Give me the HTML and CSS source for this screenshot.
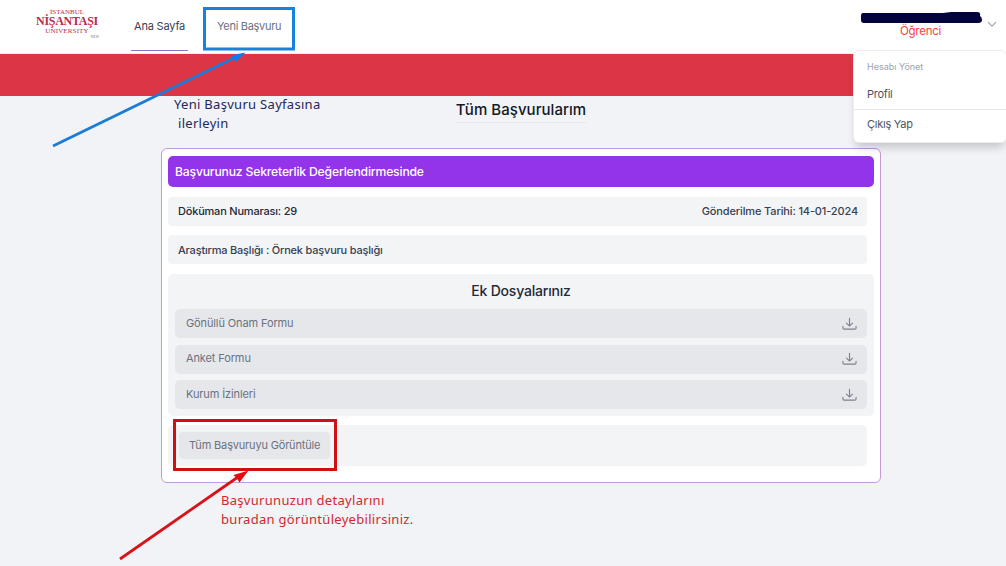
FILE: index.html
```html
<!DOCTYPE html>
<html lang="tr">
<head>
<meta charset="utf-8">
<title>Tüm Başvurularım</title>
<link rel="stylesheet" href="styles.css">
</head>
<body>
<header class="nav">
  <div class="logo"><span class="logo-top">İSTANBUL</span><span class="logo-name">NİŞANTAŞI</span><span class="logo-bottom">UNIVERSITY</span><span class="logo-sign">NEW</span></div>
  <nav class="links">
    <a class="link active"><span class="t-home">Ana Sayfa</span></a>
    <a class="link"><span class="t-new">Yeni Başvuru</span></a>
  </nav>
  <div class="user">
    <div class="identity">
      <svg class="redaction" width="122" height="12" viewBox="0 0 122 12"><path d="M2 1Q0 1 0 4V8Q0 11 3 11H117Q121 11 121 8Q121 5 119 4Q120 0 116 0H90L82 1Z" fill="#02023f"/></svg>
      <span class="role">Öğrenci</span>
    </div>
    <svg class="chevron" width="10" height="7" viewBox="0 0 10 7"><path d="M1 1.2L5 5.2L9 1.2" fill="none" stroke="#9ca3af" stroke-width="1.2"/></svg>
    <div class="menu">
      <div class="menu-title">Hesabı Yönet</div>
      <a class="menu-item">Profil</a>
      <a class="menu-item logout">Çıkış Yap</a>
    </div>
  </div>
</header>
<div class="banner"></div>
<main class="content">
  <h1 class="title"><span>Tüm Başvurularım</span></h1>
  <section class="card">
    <h2 class="status"><span>Başvurunuz Sekreterlik Değerlendirmesinde</span></h2>
    <div class="row"><span class="t-doc">Döküman Numarası: 29</span><span class="t-date">Gönderilme Tarihi: 14-01-2024</span></div>
    <div class="row subject"><span class="t-subject">Araştırma Başlığı : Örnek başvuru başlığı</span></div>
    <div class="files">
      <h3 class="files-title"><span>Ek Dosyalarınız</span></h3>
      <div class="file"><span class="t-consent">Gönüllü Onam Formu</span><svg class="download" viewBox="0 0 16 14"><path d="M8 1V9M4.8 6L8 9.2L11.2 6M1 9.5V11.2Q1 12.5 2.3 12.5H13.7Q15 12.5 15 11.2V9.5"/></svg></div>
      <div class="file"><span class="t-survey">Anket Formu</span><svg class="download" viewBox="0 0 16 14"><path d="M8 1V9M4.8 6L8 9.2L11.2 6M1 9.5V11.2Q1 12.5 2.3 12.5H13.7Q15 12.5 15 11.2V9.5"/></svg></div>
      <div class="file"><span class="t-permit">Kurum İzinleri</span><svg class="download" viewBox="0 0 16 14"><path d="M8 1V9M4.8 6L8 9.2L11.2 6M1 9.5V11.2Q1 12.5 2.3 12.5H13.7Q15 12.5 15 11.2V9.5"/></svg></div>
    </div>
    <div class="actions"><a class="button"><span>Tüm Başvuruyu Görüntüle</span></a></div>
  </section>
</main>
<svg class="marks" width="1006" height="566" viewBox="0 0 1006 566">
  <rect x="204.5" y="8.5" width="89" height="40.5" fill="none" stroke="#1682dc" stroke-width="3"/>
  <path d="M53 146L236 57" stroke="#1b7cd8" stroke-width="2.8"/>
  <path d="M245.5 52.5L230.5 55.5Q234 57.5 235.5 62Z" fill="#087df0"/>
  <rect x="174.5" y="420.5" width="161" height="49" fill="none" stroke="#cf1116" stroke-width="3"/>
  <path d="M120 559L238 477" stroke="#d81218" stroke-width="2.8"/>
  <path d="M248.5 470.5L233.5 475Q237 477.5 239.5 482.5Z" fill="#e80910"/>
</svg>
<p class="note note-new"><span class="n1">Yeni Başvuru Sayfasına</span><span class="n2">ilerleyin</span></p>
<p class="note note-detail"><span class="n3">Başvurunuzun detaylarını</span><span class="n4">buradan görüntüleyebilirsiniz.</span></p>
</body>
</html>
```
FILE: styles.css
```css
* { box-sizing: border-box; }
body { margin: 0; width: 1006px; height: 566px; overflow: hidden; position: relative; background: #f2f3f6; font-family: Inter, "Noto Sans", sans-serif; color: #374151; font-size: 11px; }
span { white-space: nowrap; }
.nav { height: 54px; background: #fff; border-bottom: 1px solid #f0edf2; display: flex; padding-left: 35px; }
.logo { width: 64px; height: 42px; padding-top: 9px; display: flex; flex-direction: column; align-items: center; font-family: "Liberation Serif", serif; color: #b92b50; }
.logo-top { font-size: 7px; line-height: 7px; }
.logo-name { font-size: 12px; line-height: 11px; font-weight: bold; letter-spacing: -0.3px; }
.logo-bottom { font-size: 7px; line-height: 8px; letter-spacing: .15px; }
.logo-sign { font-size: 4px; line-height: 4px; color: #777; align-self: flex-end; font-style: italic; }
.links { display: flex; margin-left: 32px; gap: 26px; }
.link { height: 51px; padding: 18px 3px 0; line-height: 17px; color: #6b7280; border-bottom: 2px solid transparent; letter-spacing: -.3px; }
.link.active { width: 57px; color: #374151; border-bottom: 1px solid #817cc9; letter-spacing: -.2px; }
.user { position: relative; margin-left: auto; width: 152px; padding: 12px 0 0 7px; display: flex; }
.identity { width: 122px; display: flex; flex-direction: column; align-items: center; }
.redaction { display: block; }
.role { color: #ef4444; font-size: 11.5px; line-height: 14px; margin-left: -3px; letter-spacing: -.25px; }
.chevron { margin: 9px 0 0 4px; }
.menu { position: absolute; z-index: 2; left: 0; top: 51px; width: 152px; height: 91px; background: #fff; border-radius: 5px; box-shadow: 0 0 0 1px #ededf0, 0 7px 10px -2px #0003; }
.menu-title { padding: 8px 13px 0; font-size: 9px; line-height: 16px; color: #9ca3af; }
.menu-item { display: block; height: 34px; padding: 10px 13px 0; line-height: 18px; letter-spacing: -.25px; color: #4b5563; }
.logout { height: 32px; padding-top: 5px; border-top: 1px solid #e5e7eb; }
.banner { height: 42px; background: #dc3545; }
.content { padding-left: 161px; }
.title { margin: 0 0 25px; width: 720px; height: 27px; display: flex; justify-content: center; font-size: 15px; line-height: 27px; font-weight: 500; color: #111827; letter-spacing: .05px; }
.title span { border-bottom: 1px solid #e7e9ee; }
.card { width: 720px; height: 335px; background: #fff; border: 1px solid #c09adb; border-radius: 6px; padding: 7px 6px 0; }
.status { margin: 0; height: 31px; background: #9333ea; border-radius: 5px; color: #fff; font-size: 12.2px; font-weight: 500; line-height: 31px; padding-left: 7px; letter-spacing: -.19px; }
.row { margin: 10px 7px 0 0; height: 29px; padding: 0 9px 0 10px; display: flex; justify-content: space-between; line-height: 29px; background: #f3f4f6; border-radius: 4px; font-weight: 500; letter-spacing: -.2px; }
.t-doc { color: #1f2937; }
.t-date { letter-spacing: -.14px; }
.subject { margin-top: 9px; line-height: 31px; }
.files { margin-top: 10px; height: 142px; padding: 0 7px; background: #f3f4f6; border-radius: 5px; display: flex; flex-direction: column; gap: 6.5px; }
.files-title { margin: 0 0 -6.5px; height: 35px; line-height: 34px; text-align: center; font-size: 14px; font-weight: 500; color: #1f2937; letter-spacing: -.2px; }
.file { height: 29px; flex: none; background: #e5e7eb; border-radius: 5px; display: flex; justify-content: space-between; align-items: center; padding: 0 10px 0 11px; color: #6b7280; letter-spacing: -.12px; }
.file span { line-height: 15px; margin-top: -1px; }
.download { width: 15px; height: 14px; fill: none; stroke: #7b828e; stroke-width: 1.2; stroke-linecap: round; }
.actions { margin: 9px 7px 0 0; height: 41px; padding: 7px 0 0 11px; background: #f3f4f6; border-radius: 5px; }
.button { display: block; width: 151px; height: 27px; line-height: 27px; padding-left: 10px; background: #e5e7eb; border-radius: 4px; color: #6b7280; letter-spacing: -.17px; }
.marks { position: absolute; left: 0; top: 0; pointer-events: none; }
.note { position: absolute; margin: 0; display: flex; flex-direction: column; font-family: "Noto Sans", sans-serif; font-size: 13px; line-height: 19px; letter-spacing: .3px; }
.note-new { left: 174px; top: 95px; color: #23285e; }
.n2 { padding-left: 4px; }
.note-detail { left: 221px; top: 491px; color: #d52630; }
```
